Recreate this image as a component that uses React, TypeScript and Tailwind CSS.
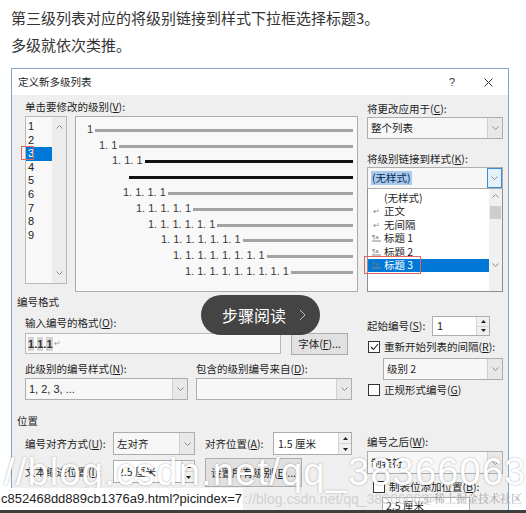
import React from 'react';

const Chev = ({ up = false }: { up?: boolean }) => (
  <svg width="7" height="4" viewBox="0 0 7 4">
    <polyline
      points={up ? '0.5,3.5 3.5,0.5 6.5,3.5' : '0.5,0.5 3.5,3.5 6.5,0.5'}
      fill="none"
      stroke="#8a8a8a"
      strokeWidth="1"
    />
  </svg>
);

const Tri = ({ up = false }: { up?: boolean }) => (
  <svg width="5" height="3" viewBox="0 0 5 3">
    <polygon points={up ? '0,3 2.5,0 5,3' : '0,0 5,0 2.5,3'} fill="#222" />
  </svg>
);

const Check = ({ checked = false }: { checked?: boolean }) => (
  <div className="flex h-[12px] w-[12px] shrink-0 items-center justify-center border border-[#333] bg-white">
    {checked && (
      <svg width="9" height="8" viewBox="0 0 9 8">
        <polyline points="1,4 3.5,6.5 8,1" fill="none" stroke="#222" strokeWidth="1.1" />
      </svg>
    )}
  </div>
);

const Select = ({
  className = '',
  text = '',
  focus = false,
  hl = false,
}: {
  className?: string;
  text?: string;
  focus?: boolean;
  hl?: boolean;
}) => (
  <div className={`flex border border-[#adadad] bg-[#f7f7f7] ${className}`}>
    <div className="flex flex-1 items-center overflow-hidden whitespace-nowrap pl-[3px]">
      {hl ? <span className="bg-[#a9cbec] px-[1px] text-[#0c2a55]">{text}</span> : text}
    </div>
    <div
      className={
        focus
          ? 'flex w-[15px] items-center justify-center border border-[#3c8bd6] bg-[#e5f1fb]'
          : 'flex w-[15px] items-center justify-center border-l border-[#cfcfcf] bg-[#e8e8e8]'
      }
    >
      <Chev />
    </div>
  </div>
);

const Spin = ({ className = '', text = '' }: { className?: string; text?: string }) => (
  <div className={`flex border border-[#adadad] bg-white ${className}`}>
    <div className="flex flex-1 items-center whitespace-nowrap pl-[4px]">{text}</div>
    <div className="flex w-[13px] flex-col border-l border-[#d4d4d4] bg-[#f0f0f0]">
      <div className="flex flex-1 items-center justify-center border-b border-[#d4d4d4]">
        <Tri up />
      </div>
      <div className="flex flex-1 items-center justify-center">
        <Tri />
      </div>
    </div>
  </div>
);

const rows = [
  { pl: 'pl-[11px]', label: '1', dark: false },
  { pl: 'pl-[23px]', label: '1. 1', dark: false },
  { pl: 'pl-[36px]', label: '1. 1. 1', dark: true },
  { pl: 'pl-[51px]', label: '', dark: true },
  { pl: 'pl-[47px]', label: '1. 1. 1. 1', dark: false },
  { pl: 'pl-[60px]', label: '1. 1. 1. 1. 1', dark: false },
  { pl: 'pl-[72px]', label: '1. 1. 1. 1. 1. 1', dark: false },
  { pl: 'pl-[85px]', label: '1. 1. 1. 1. 1. 1. 1', dark: false },
  { pl: 'pl-[97px]', label: '1. 1. 1. 1. 1. 1. 1. 1', dark: false },
  { pl: 'pl-[109px]', label: '1. 1. 1. 1. 1. 1. 1. 1. 1', dark: false },
];

const HeadIcon = () => (
  <svg width="9" height="8" viewBox="0 0 9 8">
    <text x="0" y="5" fontSize="6" fill="#777" fontFamily="Liberation Sans">¶a</text>
    <line x1="0" y1="7" x2="9" y2="7" stroke="#888" strokeWidth="1" />
  </svg>
);

const styles = [
  { icon: null, text: '(无样式)' },
  { icon: 'ret', text: '正文' },
  { icon: 'ret', text: '无间隔' },
  { icon: 'head', text: '标题 1' },
  { icon: 'head', text: '标题 2' },
  { icon: 'head', text: '标题 3', sel: true },
];

export default function App() {
  return (
    <div className="relative h-[513px] w-[526px] overflow-hidden bg-white font-['Noto_Sans_CJK_SC','Noto_Sans',sans-serif]">
      <div className="pl-[11px] pt-[4px] text-[15px] leading-[27px] text-[#333]">
        <p>第三级列表对应的将级别链接到样式下拉框选择标题3。</p>
        <p>多级就依次类推。</p>
      </div>

      <div className="ml-[11px] mt-[10px] w-[498px] border border-[#7fa3c9] text-[10.5px] leading-[14px] text-[#1e1e1e]">
        {/* title bar */}
        <div className="flex h-[26px] items-center bg-white pl-[6px]">
          <span>定义新多级列表</span>
          <span className="ml-auto font-['Liberation_Sans',sans-serif] text-[11px] text-[#333]">?</span>
          <svg className="ml-[29px] mr-[15px]" width="9" height="9" viewBox="0 0 9 9">
            <line x1="0.5" y1="0.5" x2="8.5" y2="8.5" stroke="#333" strokeWidth="1" />
            <line x1="8.5" y1="0.5" x2="0.5" y2="8.5" stroke="#333" strokeWidth="1" />
          </svg>
        </div>

        <div className="bg-[#efefef] pb-[40px] pl-[13px] pr-[4px]">
          {/* top section */}
          <div className="flex">
            <div className="w-[333px]">
              <div className="flex h-[21px] items-center pt-[2px]">
                单击要修改的级别(<u>V</u>):
              </div>
              <div className="flex items-start">
                <div className="relative flex h-[168px] w-[42px] border border-[#b9b9b9] bg-[#f8f8f8]">
                  <div className="flex-1 pt-[3px] font-['Liberation_Sans',sans-serif] text-[11px] leading-[13.6px] text-[#222]">
                    {[1, 2, 3, 4, 5, 6, 7, 8, 9].map((n) => (
                      <div key={n} className={n === 3 ? 'bg-[#0078d7] pl-[2px] text-white' : 'pl-[2px]'}>
                        {n}
                      </div>
                    ))}
                  </div>
                  <div className="flex w-[14px] flex-col items-center justify-between bg-[#ececec] py-[8px]">
                    <Chev up />
                    <Chev />
                  </div>
                  <div className="absolute left-[-5px] top-[29px] h-[14px] w-[13px] border border-[#e06666]" />
                </div>
                <div className="ml-[8px] h-[176px] w-[283px] border border-[#ababab] bg-[#f8f8f8] pr-[4px] pt-[4px]">
                  {rows.map((r, i) => (
                    <div key={i} className={`flex h-[15.8px] items-center ${r.pl}`}>
                      {r.label && (
                        <span className="whitespace-pre font-['Liberation_Sans',sans-serif] text-[11px] leading-[12px] text-[#3a3a3a]">
                          {r.label}
                        </span>
                      )}
                      <div
                        className={
                          r.dark
                            ? 'ml-[2px] mt-[3px] h-[3px] flex-1 bg-[#111]'
                            : 'ml-[2px] mt-[3px] h-[3px] flex-1 bg-[#a3a3a3]'
                        }
                      />
                    </div>
                  ))}
                </div>
              </div>
            </div>

            <div className="ml-[9px] w-[136px]">
              <div className="flex h-[22px] items-end pb-[1px]">
                将更改应用于(<u>C</u>):
              </div>
              <Select className="h-[22px] w-[136px]" text="整个列表" />
              <div className="flex h-[28px] items-end pb-[1px]">
                将级别链接到样式(<u>K</u>):
              </div>
              <Select className="h-[22px] w-[136px]" text="(无样式)" focus hl />
              <div className="relative flex h-[103px] border border-t-0 border-[#8a8f96] bg-white">
                <div className="flex-1 pt-[2px]">
                  {styles.map((s, i) => (
                    <div
                      key={i}
                      className={
                        s.sel
                          ? 'flex h-[13.5px] items-center bg-[#0078d7] text-white'
                          : 'flex h-[13.5px] items-center'
                      }
                    >
                      <div className="flex w-[16px] items-center justify-center">
                        {s.icon === 'ret' && <span className="text-[8px] leading-[8px] text-[#888]">↵</span>}
                        {s.icon === 'head' && <HeadIcon />}
                      </div>
                      <span>{s.text}</span>
                    </div>
                  ))}
                </div>
                <div className="flex w-[13px] flex-col items-center bg-[#f0f0f0] pt-[5px]">
                  <Chev up />
                  <div className="mt-[8px] h-[13px] w-[11px] bg-[#cdcdcd]" />
                  <div className="mt-[44px]">
                    <Chev />
                  </div>
                </div>
                <div className="absolute left-[-4px] top-[67px] h-[18px] w-[57px] border border-[#e06666]" />
              </div>
            </div>
          </div>

          {/* numbering format */}
          <div className="-ml-[8px] flex h-[20px] items-center">编号格式</div>
          <div className="flex">
            <div className="w-[327px]">
              <div className="flex h-[21px] items-end pb-[3px]">
                输入编号的格式(<u>O</u>):
              </div>
              <div className="flex h-[22px] items-start">
                <div className="flex h-[21px] w-[256px] items-center border border-[#b9b9b9] bg-[#f9f9f9] pl-[2px] font-['Liberation_Sans',sans-serif] text-[11px] font-bold text-[#333]">
                  <span className="bg-[#d4d4d4]">1</span>.<span className="bg-[#d4d4d4]">1</span>.
                  <span className="bg-[#d4d4d4]">1</span>
                  <span className="ml-[1px] text-[8px] font-normal text-[#999]">↵</span>
                </div>
                <div className="ml-[10px] flex h-[22px] w-[57px] items-center justify-center border border-[#adadad] bg-[#e1e1e1]">
                  字体(<u>F</u>)...
                </div>
              </div>
              <div className="flex h-[23px] items-end pb-[2px]">
                <div className="w-[171px]">
                  此级别的编号样式(<u>N</u>):
                </div>
                <div>
                  包含的级别编号来自(<u>D</u>):
                </div>
              </div>
              <div className="flex">
                <Select className="h-[22px] w-[163px] font-['Liberation_Sans',sans-serif] text-[11px]" text="1, 2, 3, ..." />
                <Select className="ml-[8px] h-[22px] w-[156px]" text="" />
              </div>
            </div>

            <div className="ml-[15px] w-[136px]">
              <div className="mt-[4px] flex h-[20px] items-center">
                <div className="w-[65px]">
                  起始编号(<u>S</u>):
                </div>
                <Spin className="h-[20px] w-[58px] font-['Liberation_Sans',sans-serif] text-[11px]" text="1" />
              </div>
              <div className="flex h-[22px] items-center pl-[1px]">
                <Check checked />
                <span className="ml-[4px]">
                  重新开始列表的间隔(<u>R</u>):
                </span>
              </div>
              <Select className="ml-[16px] h-[22px] w-[120px]" text="级别 2" />
              <div className="flex h-[20px] items-center pl-[1px]">
                <Check />
                <span className="ml-[4px]">
                  正规形式编号(<u>G</u>)
                </span>
              </div>
            </div>
          </div>

          {/* position */}
          <div className="-ml-[8px] mt-[10px] flex h-[22px] items-center">位置</div>
          <div className="flex">
            <div className="w-[327px]">
              <div className="flex h-[23px] items-center">
                <div className="w-[88px]">
                  编号对齐方式(<u>U</u>):
                </div>
                <Select className="h-[23px] w-[82px]" text="左对齐" />
                <div className="ml-[10px] w-[68px]">
                  对齐位置(<u>A</u>):
                </div>
                <Spin className="h-[23px] w-[79px]" text="1.5 厘米" />
              </div>
              <div className="mt-[5px] flex items-start">
                <div className="flex h-[23px] w-[88px] items-center">
                  文本缩进位置(<u>I</u>):
                </div>
                <Spin className="h-[23px] w-[82px]" text="2.5 厘米" />
                <div className="-mt-[2px] ml-[10px] flex h-[29px] w-[97px] items-center justify-center border border-[#adadad] bg-[#e1e1e1]">
                  设置所有级别(<u>E</u>)...
                </div>
              </div>
            </div>
            <div className="ml-[15px] w-[136px]">
              <div className="flex h-[19px] items-center">
                编号之后(<u>W</u>):
              </div>
              <Select className="h-[23px] w-[136px]" text="制表符" />
              <div className="mt-[3px] flex h-[20px] items-center pl-[6px]">
                <Check />
                <span className="ml-[4px]">
                  制表位添加位置(<u>B</u>):
                </span>
              </div>
              <div className="ml-[15px] flex h-[18px] w-[88px] items-center border border-[#adadad] bg-white pl-[3px]">
                2.5 厘米
              </div>
            </div>
          </div>
        </div>
      </div>

      {/* overlays */}
      <div className="absolute left-[201px] top-[295px] flex h-[40px] w-[119px] items-center rounded-full bg-[#3a3a3a]/95 pl-[21px] text-[16px] leading-[20px] text-white">
        <span>步骤阅读</span>
        <svg className="ml-[13px]" width="7" height="12" viewBox="0 0 7 12">
          <polyline points="1,1 6,6 1,11" fill="none" stroke="#bdbdbd" strokeWidth="1" />
        </svg>
      </div>

      <div className="absolute left-[214px] top-[491px] whitespace-nowrap font-['Liberation_Sans',sans-serif] text-[14px] leading-[16px] text-[#c9c9c9]/80">
        https://blog.csdn.net/qq_38366063
      </div>
      <div className="absolute left-[424px] top-[490px] whitespace-nowrap font-['Noto_Serif_CJK_SC','Noto_Sans_CJK_SC',serif] text-[11px] leading-[16px] text-[#a5a5a5]">
        @稀土掘金技术社区
      </div>

      <div className="absolute left-[4px] top-[452px] whitespace-nowrap font-['Liberation_Sans',sans-serif] text-[38px] leading-[40px] tracking-[1.2px] text-white [text-shadow:0_0_2px_rgba(0,0,0,0.35)]">
        //blog.csdn.net/qq_38366063
      </div>

      <div className="absolute left-0 top-[488px] flex h-[22px] w-[243px] items-center bg-white pl-[1px] font-['Liberation_Sans',sans-serif] text-[13px] text-[#222]">
        c852468dd889cb1376a9.html?picindex=7
      </div>
      <div className="absolute bottom-0 left-0 h-[3px] w-full bg-[#3d3d3d]" />
    </div>
  );
}
